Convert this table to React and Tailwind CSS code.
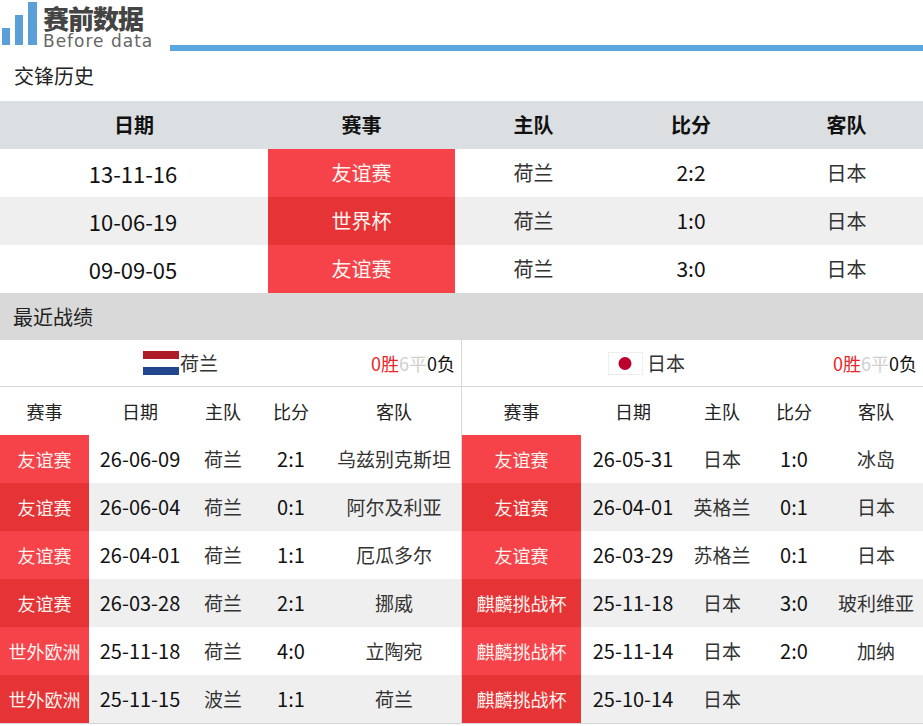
import React from 'react';

const font = { fontFamily: '"Noto Sans CJK SC", "Noto Sans", sans-serif' };

const h2h = [
  { date: '13-11-16', comp: '友谊赛', home: '荷兰', score: '2:2', away: '日本' },
  { date: '10-06-19', comp: '世界杯', home: '荷兰', score: '1:0', away: '日本' },
  { date: '09-09-05', comp: '友谊赛', home: '荷兰', score: '3:0', away: '日本' },
];

const nl = [
  ['友谊赛', '26-06-09', '荷兰', '2:1', '乌兹别克斯坦'],
  ['友谊赛', '26-06-04', '荷兰', '0:1', '阿尔及利亚'],
  ['友谊赛', '26-04-01', '荷兰', '1:1', '厄瓜多尔'],
  ['友谊赛', '26-03-28', '荷兰', '2:1', '挪威'],
  ['世外欧洲', '25-11-18', '荷兰', '4:0', '立陶宛'],
  ['世外欧洲', '25-11-15', '波兰', '1:1', '荷兰'],
];

const jp = [
  ['友谊赛', '26-05-31', '日本', '1:0', '冰岛'],
  ['友谊赛', '26-04-01', '英格兰', '0:1', '日本'],
  ['友谊赛', '26-03-29', '苏格兰', '0:1', '日本'],
  ['麒麟挑战杯', '25-11-18', '日本', '3:0', '玻利维亚'],
  ['麒麟挑战杯', '25-11-14', '日本', '2:0', '加纳'],
  ['麒麟挑战杯', '25-10-14', '日本', '', ''],
];

function Logo() {
  return (
    <div className="flex h-[50px] pl-[2px]">
      <svg width="38" height="46" viewBox="0 0 38 46" className="mt-[1px]">
        <rect x="0" y="27" width="8" height="17" fill="#5b9fd9" />
        <rect x="13" y="14" width="8" height="30" fill="#5b9fd9" />
        <rect x="26" y="1" width="9" height="43" fill="#5b9fd9" />
      </svg>
      <div className="ml-[3px] flex flex-col pt-[3px]">
        <span className="text-[26px] leading-[30px] font-black text-[#444] tracking-[-1px]">赛前数据</span>
        <span className="text-[17px] leading-[17px] text-[#666] tracking-[1px]" style={{ fontFamily: '"DejaVu Sans", sans-serif' }}>Before data</span>
      </div>
      <div className="flex-1 ml-[17px] mt-[45px] h-[6px] bg-[#5aa6de]" />
    </div>
  );
}

function Record() {
  return (
    <span className="pr-[6px] text-[18px]">
      <span className="text-[#e8262a]">0胜</span>
      <span className="text-[#cfcfcf]">6平</span>
      <span className="text-[#111]">0负</span>
    </span>
  );
}

function Panel({ rows, widths, flag, team, border, shift }) {
  return (
    <div className={`flex-1 flex flex-col ${border ? 'border-r border-[#d6d6d6]' : ''}`}>
      <div className="h-[47px] flex items-center border-b border-[#d6d6d6] text-[19px] text-[#333]">
        <div className={`flex-1 flex items-center justify-center ${shift}`}>
          {flag}
          <span>{team}</span>
        </div>
        <Record />
      </div>
      <div className="flex h-[48px] items-center text-[18px] text-[#222]">
        {['赛事', '日期', '主队', '比分', '客队'].map((h, i) => (
          <div key={h} className={`${widths[i]} text-center`}>{h}</div>
        ))}
      </div>
      {rows.map((r, idx) => (
        <div key={idx} className={`flex h-[48px] items-center ${idx % 2 ? 'bg-[#efefef]' : 'bg-white'}`}>
          <div className={`${widths[0]} h-full flex items-center justify-center text-[18px] text-[#fff3f0] ${idx % 2 ? 'bg-[#e63335]' : 'bg-[#f6434a]'}`}>{r[0]}</div>
          <div className={`${widths[1]} text-center text-[20px] text-[#111]`}>{r[1]}</div>
          <div className={`${widths[2]} text-center text-[19px] text-[#333]`}>{r[2]}</div>
          <div className={`${widths[3]} text-center text-[20px] text-[#111]`}>{r[3]}</div>
          <div className={`${widths[4]} text-center text-[19px] text-[#333]`}>{r[4]}</div>
        </div>
      ))}
    </div>
  );
}

export default function App() {
  return (
    <div className="w-[923px] h-[726px] bg-white overflow-hidden" style={font}>
      <Logo />
      <div className="h-[51px] flex items-center pl-[14px] text-[20px] text-[#222]">交锋历史</div>
      <div className="flex h-[48px] items-center bg-[#dcdfe2] text-[20px] font-bold text-[#111]">
        <div className="w-[268px] text-center">日期</div>
        <div className="w-[187px] text-center">赛事</div>
        <div className="w-[157px] text-center">主队</div>
        <div className="w-[158px] text-center">比分</div>
        <div className="flex-1 text-center">客队</div>
      </div>
      {h2h.map((r, i) => (
        <div key={i} className={`flex h-[48px] items-center ${i % 2 ? 'bg-[#efefef]' : 'bg-white'}`}>
          <div className="w-[266px] text-center text-[22px] text-[#111]">{r.date}</div>
          <div className={`w-[187px] ml-[2px] h-full flex items-center justify-center text-[20px] text-[#fff3f0] ${i % 2 ? 'bg-[#e63335]' : 'bg-[#f6434a]'}`}>{r.comp}</div>
          <div className="w-[157px] text-center text-[20px] text-[#333]">{r.home}</div>
          <div className="w-[158px] text-center text-[21px] text-[#111]">{r.score}</div>
          <div className="flex-1 text-center text-[20px] text-[#333]">{r.away}</div>
        </div>
      ))}
      <div className="h-[47px] flex items-center pl-[13px] bg-[#d9d9d9] text-[20px] text-[#222]">最近战绩</div>
      <div className="flex border-b border-[#d6d6d6]">
        <Panel
          border
          rows={nl}
          team="荷兰"
          shift="pr-[10px]"
          widths={['w-[89px]', 'w-[102px]', 'w-[64px]', 'w-[72px]', 'flex-1']}
          flag={
            <svg width="36" height="24" viewBox="0 0 36 24" className="mr-[1px]">
              <rect width="36" height="8" fill="#ae1c28" />
              <rect y="8" width="36" height="8" fill="#ffffff" />
              <rect y="16" width="36" height="8" fill="#21468b" />
            </svg>
          }
        />
        <Panel
          rows={jp}
          team="日本"
          shift="pr-[2px]"
          widths={['w-[119px]', 'w-[104px]', 'w-[74px]', 'w-[70px]', 'flex-1']}
          flag={
            <svg width="35" height="23" viewBox="0 0 35 23" className="mr-[4px]">
              <rect x="0.5" y="0.5" width="34" height="22" fill="#fff" stroke="#eee" />
              <circle cx="17" cy="11.5" r="6.5" fill="#bc002d" />
            </svg>
          }
        />
      </div>
    </div>
  );
}
